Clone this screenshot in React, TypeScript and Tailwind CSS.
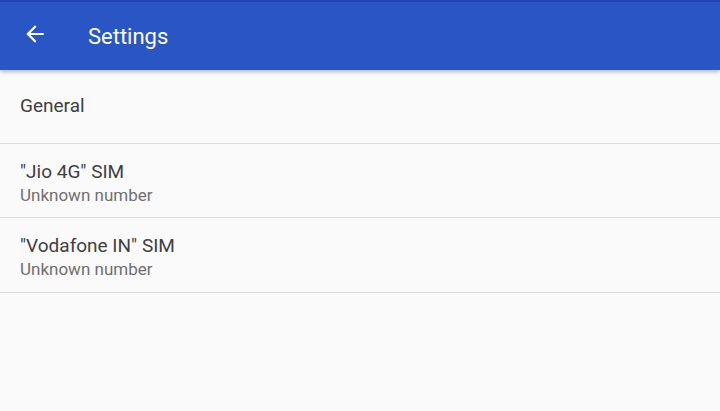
const rows = [
  { title: '"Jio 4G" SIM', sub: "Unknown number", h: "h-[74px]" },
  { title: '"Vodafone IN" SIM', sub: "Unknown number", h: "h-[75px]" },
];

export default function App() {
  return (
    <div className="w-[720px] h-[411px] bg-[#fafafa] font-['Roboto',sans-serif] overflow-hidden">
      <div className="relative z-10 h-[70px] bg-[#2955c5] border-t-2 border-[#2343b3] shadow-[0_2px_4px_rgba(0,0,0,0.25)] flex items-center">
        <div className="w-[68px] flex items-center justify-start pl-[22px] -mt-[4px]">
          <svg width="26" height="26" viewBox="0 0 24 24" fill="none">
            <path d="M20 11H7.83l5.59-5.59L12 4l-8 8 8 8 1.41-1.41L7.83 13H20v-2z" fill="#ffffff" />
          </svg>
        </div>
        <div className="text-white text-[22px] ml-[20px]">Settings</div>
      </div>
      <div className="h-[74px] flex items-center px-5 border-b border-[#dcdcdc]">
        <span className="text-[19px] text-[#404040]">General</span>
      </div>
      {rows.map((r) => (
        <div key={r.title} className={`${r.h} flex flex-col justify-center px-5 pt-[3px] border-b border-[#dcdcdc]`}>
          <span className="text-[19px] text-[#404040] leading-[25px]">{r.title}</span>
          <span className="text-[17px] text-[#707070] leading-[22px]">{r.sub}</span>
        </div>
      ))}
    </div>
  );
}
